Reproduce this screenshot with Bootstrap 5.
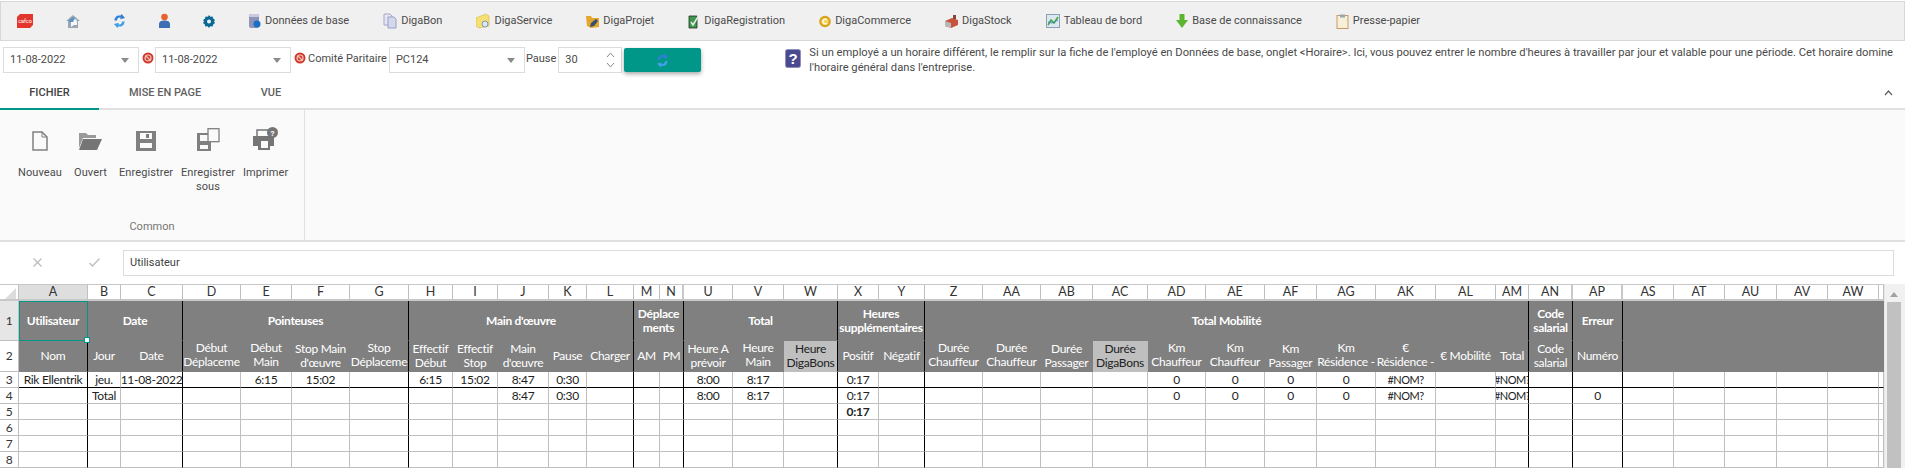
<!DOCTYPE html>
<html lang="fr">
<head>
  <meta charset="UTF-8" />
  <meta name="viewport" content="width=device-width, initial-scale=1.0" />
  <title>Pointeuses</title>
  <link href="https://cdn.jsdelivr.net/npm/bootstrap@5.3.0/dist/css/bootstrap.min.css" rel="stylesheet">
  <style>
    html, body { height: 468px; overflow: hidden; }
    body { font-family: Roboto, "Liberation Sans", sans-serif; font-size: 11px; color: #4a4a4a; background: #fff; }
    .top-bar { height: 40px; margin-top: 1px; background: #f0f0f0; border: 1px solid #d8d8d8; padding-left: 16px; }
    .top-item { padding-right: 34px; white-space: nowrap; }
    .top-item.icon-only { padding-right: 33px; }
    .top-item svg { display: block; flex: none; }
    .filter-row { height: 35px; padding: 6px 0 0 3px; }
    .pick-box { height: 26px; border: 1px solid #dcdcdc; padding-left: 6px; background: #fff; }
    .pick-wide { width: 136px; }
    .pick-num { width: 64px; }
    .caret-down { margin-left: auto; margin-right: 9px; border-left: 4px solid transparent; border-right: 4px solid transparent; border-top: 5px solid #8a8a8a; }
    .stop-dot { margin: 5px 1px 0 3px; flex: none; }
    .filter-label { margin: 0 2px 0 1px; white-space: nowrap; }
    .spin-arrows { margin-left: auto; margin-right: 6px; }
    .go-btn { width: 77px; height: 24px; margin: 1px 0 0 2px; background: #009688; border: 0; border-radius: 2px; box-shadow: 0 2px 4px rgba(0,0,0,.35); padding: 0; }
    .help-note { margin-left: 84px; width: 1112px; font-size: 11.2px; line-height: 14.5px; margin-top: -1px; }
    .help-note svg { flex: none; margin: 3px 8px 0 0; }
    .tab-strip { height: 34px; border-bottom: 2px solid #e0e0e0; }
    .tab-link { height: 34px; padding-top: 9px; text-align: center; color: #616161; font-weight: 500; border-bottom: 2px solid transparent; }
    .tab-link.is-on { color: #424242; border-bottom-color: #009688; }
    .tab-a { width: 99px; }
    .tab-b { width: 132px; }
    .tab-c { width: 80px; }
    .ribbon-fold { margin-left: auto; margin-right: 12px; margin-top: 14px; }
    .ribbon-pane { height: 130px; background: #fafafa; }
    .ribbon-group { width: 305px; border-right: 1px solid #e0e0e0; height: 130px; }
    .ribbon-cmds { height: 109px; padding: 21px 0 0 18px; }
    .ribbon-cmd { text-align: center; line-height: 14px; letter-spacing: .1px; white-space: nowrap; }
    .ribbon-cmd svg { display: block; margin: 0 auto 15px; }
    .ribbon-cmd svg.icon-tall { margin-top: -3px; }
    .ribbon-cmd svg.icon-taller { margin-top: -4px; }
    .cmd-a { width: 44px; margin-right: 12px; }
    .cmd-b { width: 33px; margin-right: 12px; }
    .cmd-c { width: 54px; margin-right: 8px; }
    .cmd-d { width: 54px; margin-right: 8px; }
    .cmd-e { width: 44px; }
    .ribbon-title { color: #757575; text-align: center; }
    .formula-row { height: 44px; border-top: 2px solid #e0e0e0; padding: 8px 11px 0 0; }
    .formula-btns { width: 123px; padding-top: 8px; }
    .formula-btns svg { margin-left: 33px; }
    .formula-btns svg + svg { margin-left: 47px; }
    .formula-input { height: 26px; border: 1px solid #dcdcdc; padding: 4px 6px; color: #424242; }
    .sheet-wrap { height: 184px; overflow: hidden; }
    .sheet-grid { table-layout: fixed; width: 1884px; border-collapse: separate; border-spacing: 0; font-family: Lato, "Liberation Sans", sans-serif; font-size: 12px; letter-spacing: -.3px; color: #222; }
    .sheet-grid td { border: solid #c0c0c0; border-width: 0 1px 1px 0; padding: 0; text-align: center; vertical-align: middle; overflow: hidden; line-height: 14px; }
    .sheet-grid tr { height: 16px; }
    .sheet-grid tr.row-letters { height: 17px; }
    .sheet-grid tr.row-head-a { height: 40px; }
    .sheet-grid tr.row-head-b { height: 31px; }
    .sheet-grid td.col-letter { background: #fff; color: #333; font-size: 12.5px; letter-spacing: 0; border-top: 1px solid #c8c8c8; border-bottom: 2px solid #c8c8c8; }
    .sheet-grid td.col-letter.is-sel { background: #dedede; }
    .sheet-grid td.col-letter.is-after-hidden { border-right: 2px solid #c8c8c8; }
    .sheet-grid td.row-num { color: #333; }
    .sheet-grid td.row-num.is-sel { background: #e6e6e6; }
    .sheet-grid td.head-cell { background: #808080; color: #fff; border-color: #808080; }
    .sheet-grid td.head-main { font-weight: 700; }
    .sheet-grid td.head-light { background: #bfbfbf; color: #222; border-color: #bfbfbf; }
    .sheet-grid td.edge-right { border-right-color: #000; }
    .sheet-grid td.edge-bottom { border-bottom-color: #000; }
    .head-clip { height: 30px; overflow: hidden; white-space: nowrap; }
    .head-mid { display: flex; align-items: center; justify-content: center; }
    .one-line { display: flex; justify-content: center; white-space: nowrap; overflow: hidden; }
    .err-val { font-size: 11px; letter-spacing: -.5px; }
    .corner-mark { width: 0; height: 0; margin: 2px 2px 0 auto; border-left: 11px solid transparent; border-bottom: 11px solid #dcdcdc; }
    .sheet-grid td.sel-cell { position: relative; overflow: visible; border-right-color: #009688; border-bottom-color: #009688; outline: 1px solid #009688; outline-offset: -1px; }
    .sel-handle { position: absolute; right: -3px; bottom: -3px; width: 6px; height: 6px; background: #fff; border: 1px solid #009688; }
    .sheet-bar { width: 21px; height: 184px; background: #f1f1f1; border-left: 1px solid #e6e6e6; margin-left: auto; padding: 2px 4px 0 2px; flex: none; }
    .bar-up { width: 0; height: 0; margin: 6px auto 5px; border-left: 4px solid transparent; border-right: 4px solid transparent; border-bottom: 5px solid #a3a3a3; }
    .bar-thumb { height: 170px; background: #c1c1c1; }
  </style>
</head>
<body>
  <svg width="0" height="0" class="d-block position-absolute">
    <defs>
      <symbol id="ic-refresh" viewBox="0 0 14 16">
        <path d="M1.500 7.500C1.500 3.500 5 1.200 8.200 2.200L9.200 .5 13 4.700 7.500 6 8.400 4.500C6 3.900 4.400 5.200 4.300 7.500Z" fill="#2f7fd6"/>
        <path d="M12.500 8.500C12.500 12.500 9 14.800 5.800 13.800L4.800 15.500 1 11.300 6.500 10 5.600 11.500C8 12.100 9.600 10.800 9.700 8.500Z" fill="#3fa0e8"/>
      </symbol>
      <symbol id="ic-stop" viewBox="0 0 12 12">
        <circle cx="6" cy="6" r="5.500" fill="#cf3a2c"/>
        <circle cx="6" cy="6" r="3" fill="none" stroke="#f3c0b8" stroke-width="1.200"/>
        <path d="M3.500 3.500l5 5" stroke="#f3c0b8" stroke-width="1.200"/>
      </symbol>
    </defs>
  </svg>

  <div class="top-bar d-flex align-items-center">
    <div class="top-item icon-only">
      <svg width="16" height="16" viewBox="0 0 16 16"><path d="M3 1H16V12L13 15H0V4Z" fill="#e3352b"/><text x="8" y="10" font-size="5.500" fill="#fff" text-anchor="middle" font-family="Roboto">cafco</text></svg>
    </div>
    <div class="top-item icon-only">
      <svg width="14" height="15" viewBox="0 0 14 15"><path d="M7 1L14 7H12V14H2V7H0Z" fill="#9aa6b2"/><path d="M5 8a3 3 0 0 1 6 0v3H8L5 13Z" fill="#f4f6f8"/><path d="M3 6l4-3 2 1-2 4H3Z" fill="#5d94c8"/></svg>
    </div>
    <div class="top-item icon-only"><svg width="13" height="16"><use href="#ic-refresh"/></svg></div>
    <div class="top-item icon-only">
      <svg width="11" height="16" viewBox="0 0 11 16"><circle cx="5.500" cy="4" r="3.300" fill="#e8622c"/><path d="M0 15V11C0 8.500 2.500 7.500 5.500 7.500S11 8.500 11 11V15Z" fill="#3d6fb4"/></svg>
    </div>
    <div class="top-item icon-only">
      <svg width="12" height="13" viewBox="0 0 12 13"><path d="M6 0l1.300 1.800 2.300-.4.600 2.200 1.800 1.400L11 6.500l1 1.500-1.800 1.400-.6 2.200-2.300-.4L6 13l-1.300-1.800-2.300.4-.6-2.200L0 8l1-1.500-.8-1.500L2 3.600l.6-2.200 2.300.4Z" fill="#0b6a94"/><circle cx="6" cy="6.500" r="2" fill="#f0f0f0"/></svg>
    </div>
    <div class="top-item d-flex align-items-center gap-1">
      <svg width="13" height="16" viewBox="0 0 13 16"><rect x="1" y="1" width="10" height="14" rx="2" fill="#8e94b8"/><rect x="1" y="1" width="10" height="3" rx="1.500" fill="#c9cce0"/><circle cx="9" cy="11" r="3.500" fill="#1a6fc4"/></svg>
      <span>Données de base</span>
    </div>
    <div class="top-item d-flex align-items-center gap-1">
      <svg width="14" height="16" viewBox="0 0 14 16"><path d="M1 1H7L9 3V12H1Z" fill="#e6e6f2" stroke="#a4a8c8"/><path d="M5 4H11L13 6V15H5Z" fill="#d5d8ec" stroke="#9a9fc4"/></svg>
      <span>DigaBon</span>
    </div>
    <div class="top-item d-flex align-items-center gap-1">
      <svg width="14" height="16" viewBox="0 0 14 16"><path d="M0 5L10 1 13 3V13L3 15 0 13Z" fill="#f6df73" stroke="#d3b64a" stroke-width=".6"/><circle cx="9" cy="11" r="3" fill="#dfe6ee" stroke="#7d98b8"/></svg>
      <span>DigaService</span>
    </div>
    <div class="top-item d-flex align-items-center gap-1">
      <svg width="13" height="15" viewBox="0 0 13 15"><path d="M0 2H5L6 4H13V13L5 14 1 12Z" fill="#e4a62d"/><path d="M5 9L10 5 12 7 8 12 4 13Z" fill="#33506f"/></svg>
      <span>DigaProjet</span>
    </div>
    <div class="top-item d-flex align-items-center gap-1">
      <svg width="12" height="15" viewBox="0 0 12 15"><path d="M1 2H9V14H1Z" fill="#3a9a48" stroke="#2a2a2a" stroke-width=".8"/><path d="M3 8L5 11 11 1" fill="none" stroke="#e8e8e8" stroke-width="1.500"/></svg>
      <span>DigaRegistration</span>
    </div>
    <div class="top-item d-flex align-items-center gap-1">
      <svg width="12" height="13" viewBox="0 0 12 13"><circle cx="6" cy="6.500" r="5.800" fill="#d9a21b"/><circle cx="6" cy="6.500" r="3.600" fill="#f5d45e"/><path d="M7.800 4.800A2.300 2.300 0 1 0 7.800 8.200" fill="none" stroke="#fff" stroke-width="1.200"/></svg>
      <span>DigaCommerce</span>
    </div>
    <div class="top-item d-flex align-items-center gap-1">
      <svg width="13" height="13" viewBox="0 0 13 13"><path d="M0 6L7 3 13 5V10L6 13 0 11Z" fill="#c8533c"/><path d="M0 6L6 8V13L0 11Z" fill="#b8b8b8"/><path d="M8 0h3v4H8Z" fill="#7f4a3a"/></svg>
      <span>DigaStock</span>
    </div>
    <div class="top-item d-flex align-items-center gap-1">
      <svg width="14" height="14" viewBox="0 0 14 14"><rect x=".5" y=".5" width="13" height="13" fill="#dde7f0" stroke="#8ba0b5"/><path d="M2 11L5 6 8 9 12 3" fill="none" stroke="#3ea83a" stroke-width="1.500"/><path d="M2 8L6 9 12 6" fill="none" stroke="#4a86c5"/></svg>
      <span>Tableau de bord</span>
    </div>
    <div class="top-item d-flex align-items-center gap-1">
      <svg width="12" height="14" viewBox="0 0 12 14"><path d="M3.500 0H8.500V6H12L6 14 0 6H3.500Z" fill="#5cb531"/></svg>
      <span>Base de connaissance</span>
    </div>
    <div class="top-item d-flex align-items-center gap-1">
      <svg width="13" height="15" viewBox="0 0 13 15"><rect x="1" y="1.500" width="11" height="13" fill="#f7f0d8" stroke="#c79a63"/><rect x="4" y=".5" width="5" height="3" fill="#9aa6b2"/></svg>
      <span>Presse-papier</span>
    </div>
  </div>

  <div class="filter-row d-flex align-items-start">
    <div class="pick-box pick-wide d-flex align-items-center">11-08-2022<span class="caret-down"></span></div>
    <svg class="stop-dot" width="12" height="12"><use href="#ic-stop"/></svg>
    <div class="pick-box pick-wide d-flex align-items-center">11-08-2022<span class="caret-down"></span></div>
    <svg class="stop-dot" width="12" height="12"><use href="#ic-stop"/></svg>
    <span class="filter-label pt-1">Comité Paritaire</span>
    <div class="pick-box pick-wide d-flex align-items-center">PC124<span class="caret-down"></span></div>
    <span class="filter-label pt-1">Pause</span>
    <div class="pick-box pick-num d-flex align-items-center">30
      <svg class="spin-arrows" width="9" height="18" viewBox="0 0 9 18"><path d="M1 6l3.500-4L8 6M1 12l3.500 4L8 12" fill="none" stroke="#8a8a8a"/></svg>
    </div>
    <button type="button" class="go-btn d-flex align-items-center justify-content-center"><svg width="13" height="15"><use href="#ic-refresh"/></svg></button>
    <div class="help-note d-flex">
      <svg width="16" height="19" viewBox="0 0 16 19"><rect x=".5" y=".5" width="15" height="18" rx="2" fill="#4b4a8f" stroke="#8f90bb"/><text x="8" y="15" font-size="15" font-weight="700" fill="#fff" text-anchor="middle" font-family="Liberation Sans">?</text></svg>
      <div>Si un employé a un horaire différent, le remplir sur la fiche de l'employé en Données de base, onglet &lt;Horaire&gt;. Ici, vous pouvez entrer le nombre d'heures à travailler par jour et valable pour une période. Cet horaire domine l'horaire général dans l'entreprise.</div>
    </div>
  </div>

  <div class="tab-strip d-flex">
    <div class="tab-link tab-a is-on">FICHIER</div>
    <div class="tab-link tab-b">MISE EN PAGE</div>
    <div class="tab-link tab-c">VUE</div>
    <svg class="ribbon-fold" width="9" height="6" viewBox="0 0 9 6"><path d="M1 5l3.500-4L8 5" fill="none" stroke="#616161" stroke-width="1.300"/></svg>
  </div>

  <div class="ribbon-pane d-flex">
    <div class="ribbon-group">
      <div class="ribbon-cmds d-flex align-items-start">
        <div class="ribbon-cmd cmd-a">
          <svg width="16" height="20" viewBox="0 0 16 20"><path d="M1 1H10L15 6V19H1Z" fill="none" stroke="#808080" stroke-width="1.500"/><path d="M10 1V6H15" fill="none" stroke="#808080"/></svg>
          Nouveau
        </div>
        <div class="ribbon-cmd cmd-b">
          <svg width="23" height="20" viewBox="0 0 23 20"><path d="M0 2H7L9 4H17V7H4L0 17Z" fill="#9a9a9a"/><path d="M4 8H23L18 19H0Z" fill="#757575"/></svg>
          Ouvert
        </div>
        <div class="ribbon-cmd cmd-c">
          <svg width="20" height="20" viewBox="0 0 20 20"><path d="M0 0H20V20H0Z" fill="#808080"/><rect x="4" y="2" width="12" height="6" fill="#fafafa"/><rect x="10" y="3" width="3" height="4" fill="#808080"/><rect x="4" y="12" width="12" height="5" fill="#fafafa"/></svg>
          Enregistrer
        </div>
        <div class="ribbon-cmd cmd-d">
          <svg class="icon-tall" width="23" height="23" viewBox="0 0 23 23"><path d="M0 5H14V23H0Z" fill="#808080"/><rect x="3" y="7" width="8" height="6" fill="#fafafa"/><rect x="3" y="17" width="8" height="4" fill="#fafafa"/><rect x="11" y=".7" width="11" height="13" fill="#fafafa" stroke="#808080" stroke-width="1.300"/></svg>
          Enregistrer<br>sous
        </div>
        <div class="ribbon-cmd cmd-e">
          <svg class="icon-taller" width="25" height="24" viewBox="0 0 25 24"><rect x="4" y="3" width="13" height="7" fill="#fafafa" stroke="#757575" stroke-width="1.500"/><path d="M0 9H21V19H17V23H5V19H0Z" fill="#757575"/><rect x="8" y="14" width="7" height="7" fill="#fafafa"/><circle cx="19.500" cy="5.500" r="5.500" fill="#757575"/><text x="19.500" y="8.500" font-size="8" font-weight="700" fill="#fff" text-anchor="middle" font-family="Roboto">?</text></svg>
          Imprimer
        </div>
      </div>
      <div class="ribbon-title">Common</div>
    </div>
  </div>

  <div class="formula-row d-flex">
    <div class="formula-btns d-flex align-items-start">
      <svg width="9" height="9" viewBox="0 0 9 9"><path d="M.5.500l8 8M8.500.500l-8 8" stroke="#bdbdbd" stroke-width="1.300"/></svg>
      <svg width="11" height="9" viewBox="0 0 11 9"><path d="M.5 5l3 3 7-7.500" fill="none" stroke="#bdbdbd" stroke-width="1.300"/></svg>
    </div>
    <div class="formula-input flex-grow-1">Utilisateur</div>
  </div>

  <div class="sheet-wrap d-flex">
    <table class="sheet-grid" id="sheet"></table>
    <div class="sheet-bar"><div class="bar-up"></div><div class="bar-thumb"></div></div>
  </div>

  <script src="https://cdn.jsdelivr.net/npm/bootstrap@5.3.0/dist/js/bootstrap.bundle.min.js"></script>
  <script>
    const edges = [0,19,88,121,183,241,292,350,409,453,498,549,587,634,660,684,733,784,838,879,925,983,1041,1093,1148,1206,1265,1317,1376,1436,1496,1529,1573,1623,1674,1725,1777,1828,1879,1884];
    const letters = ["A","B","C","D","E","F","G","H","I","J","K","L","M","N","U","V","W","X","Y","Z","AA","AB","AC","AD","AE","AF","AG","AK","AL","AM","AN","AP","AS","AT","AU","AV","AW",""];
    // columns closed by a black line on the right
    const blackRight = ["A","C","G","L","N","W","Y","AM","AN","AP"];
    // hidden columns follow these, the letter row shows a thicker line
    const beforeHidden = ["N","AN","AP"];

    const groups = [
      ["Utilisateur", ["A"]], ["Date", ["B","C"]], ["Pointeuses", ["D","E","F","G"]], ["Main d'œuvre", ["H","I","J","K","L"]],
      ["Déplace<br>ments", ["M","N"]], ["Total", ["U","V","W"]], ["Heures<br>supplémentaires", ["X","Y"]],
      ["Total Mobilité", ["Z","AA","AB","AC","AD","AE","AF","AG","AK","AL","AM"]], ["Code<br>salarial", ["AN"]], ["Erreur", ["AP"]],
      ["", ["AS","AT","AU","AV","AW",""]]
    ];
    // label, then "t" when the text sits at the top of the row (too tall, cut at the bottom), "l" for a light cell
    const heads = [
      ["Nom"],["Jour"],["Date"],["Début<br>Déplaceme","t"],["Début<br>Main<br>d'œuvre","t"],["Stop Main<br>d'œuvre"],["Stop<br>Déplaceme","t"],
      ["Effectif<br>Début"],["Effectif<br>Stop"],["Main<br>d'œuvre"],["Pause"],["Charger"],["AM"],["PM"],
      ["Heure A<br>prévoir"],["Heure<br>Main<br>d'œuvre","t"],["Heure<br>DigaBons","l"],["Positif"],["Négatif"],
      ["Durée<br>Chauffeur","t"],["Durée<br>Chauffeur","t"],["Durée<br>Passager"],["Durée<br>DigaBons","l"],
      ["Km<br>Chauffeur","t"],["Km<br>Chauffeur","t"],["Km<br>Passager"],["Km<br>Résidence -<br>Domicile","t"],["€<br>Résidence -<br>Domicile","t"],
      ["€ Mobilité"],["Total"],["Code<br>salarial"],["Numéro"],[""],[""],[""],[""],[""],[""]
    ];
    const err = '<span class="err-val">#NOM?</span>';
    const rows = {
      3: { A:"Rik Ellentrik", B:"jeu.", C:"11-08-2022", E:"6:15", F:"15:02", H:"6:15", I:"15:02", J:"8:47", K:"0:30", U:"8:00", V:"8:17", X:"0:17", AD:"0", AE:"0", AF:"0", AG:"0", AK:err, AM:err },
      4: { B:"Total", J:"8:47", K:"0:30", U:"8:00", V:"8:17", X:"0:17", AD:"0", AE:"0", AF:"0", AG:"0", AK:err, AM:err, AP:"0" },
      5: { X:"<b>0:17</b>" }
    };

    let html = "<colgroup>";
    edges.slice(1).forEach((e, i) => { html += `<col style="width:${e - edges[i]}px">`; });
    html += "</colgroup>";

    const edgeClass = name => blackRight.includes(name) ? " edge-right" : "";

    html += `<tr class="row-letters"><td class="col-letter"><div class="corner-mark"></div></td>`;
    letters.forEach(l => {
      const sel = l === "A" ? " is-sel" : "";
      const thick = beforeHidden.includes(l) ? " is-after-hidden" : "";
      html += `<td class="col-letter${sel}${thick}">${l}</td>`;
    });
    html += "</tr>";

    html += `<tr class="row-head-a"><td class="row-num is-sel">1</td>`;
    groups.forEach(([label, cols], i) => {
      const last = cols[cols.length - 1];
      const sel = i === 0 ? " sel-cell" : edgeClass(last);
      html += `<td colspan="${cols.length}" class="head-cell head-main${sel}">${label}${i === 0 ? '<span class="sel-handle"></span>' : ""}</td>`;
    });
    html += "</tr>";

    html += `<tr class="row-head-b"><td class="row-num">2</td>`;
    heads.forEach(([label, kind], i) => {
      const light = kind === "l" ? " head-light" : "";
      const inner = kind === "t" ? "" : " head-mid";
      html += `<td class="head-cell${light}${edgeClass(letters[i])}"><div class="head-clip${inner}"><div>${label}</div></div></td>`;
    });
    html += "</tr>";

    for (let n = 3; n <= 9; n++) {
      const data = rows[n] || {};
      html += `<tr><td class="row-num">${n}</td>`;
      letters.forEach(l => {
        const bottom = n === 3 ? " edge-bottom" : "";
        html += `<td class="${edgeClass(l)}${bottom}"><div class="one-line">${data[l] || ""}</div></td>`;
      });
      html += "</tr>";
    }
    document.getElementById("sheet").innerHTML = html;
  </script>
</body>
</html>
